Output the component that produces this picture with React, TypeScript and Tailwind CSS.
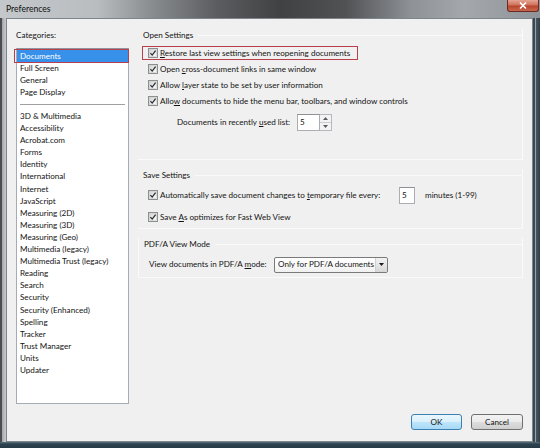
import React from "react";

const categoriesTop = ["Full Screen", "General", "Page Display"];
const categoriesBottom = [
  "3D & Multimedia",
  "Accessibility",
  "Acrobat.com",
  "Forms",
  "Identity",
  "International",
  "Internet",
  "JavaScript",
  "Measuring (2D)",
  "Measuring (3D)",
  "Measuring (Geo)",
  "Multimedia (legacy)",
  "Multimedia Trust (legacy)",
  "Reading",
  "Search",
  "Security",
  "Security (Enhanced)",
  "Spelling",
  "Tracker",
  "Trust Manager",
  "Units",
  "Updater",
];

function Check() {
  return (
    <svg width="10" height="10" viewBox="0 0 10 10" className="shrink-0">
      <defs>
        <linearGradient id="cbg" x1="0" y1="0" x2="1" y2="1">
          <stop offset="0" stopColor="#d4d4d4" />
          <stop offset="1" stopColor="#fbfbfb" />
        </linearGradient>
      </defs>
      <rect x="0.5" y="0.5" width="9" height="9" fill="#f6f6f6" stroke="#8e8f8f" />
      <rect x="1.5" y="1.5" width="7" height="7" fill="url(#cbg)" stroke="#c9c9c9" strokeWidth="0.6" />
      <path d="M2.4 5.1 L4.2 7.1 L7.6 2.6" fill="none" stroke="#2b3035" strokeWidth="1.3" />
    </svg>
  );
}

function U({ children }: { children: React.ReactNode }) {
  return <span className="underline underline-offset-[1px] decoration-[0.8px]">{children}</span>;
}

function Heading({ text }: { text: string }) {
  return (
    <div className="h-[12px] flex items-center pl-[5px]">
      <span className="whitespace-nowrap">{text}</span>
      <div className="flex-1 ml-[5px] h-px bg-[#fafafa]" />
    </div>
  );
}

function Field({ w, value }: { w: string; value: string }) {
  return (
    <div className={`${w} h-[17px] bg-white border border-[#abadb3] border-t-[#8e9094] flex items-center pl-[2px]`}>
      {value}
    </div>
  );
}

export default function App() {
  return (
    <div className="w-[540px] h-[448px] flex flex-col overflow-hidden bg-[#33434d] font-['Lato','Segoe_UI',sans-serif] text-[8.1px] leading-none text-[#141414]">
      {/* Title bar */}
      <div className="h-[18px] shrink-0 relative flex items-center bg-[linear-gradient(90deg,#c4c8cb_0%,#b9bdc0_18%,#8a8d90_28%,#5b5d60_40%,#404143_52%,#505254_64%,#8e9195_76%,#a4a8ac_86%,#8f949a_100%)]">
        <span className="pl-[6px] text-[8.6px] text-[#101010]">Preferences</span>
        <div className="absolute right-[1px] top-0 w-[32px] h-[12px] rounded-b-[3px] border border-[#6b2a22] border-t-0 bg-[linear-gradient(180deg,#e5a493_0%,#d0735c_45%,#b8452c_55%,#c9674e_100%)] flex items-center justify-center">
          <svg width="8" height="7" viewBox="0 0 8 7">
            <path d="M1 0.5 L7 6.5 M7 0.5 L1 6.5" stroke="#ffffff" strokeWidth="1.6" />
          </svg>
        </div>
      </div>

      <div className="flex-1 flex min-h-0">
        {/* left frame */}
        <div className="w-[6px] shrink-0 bg-[linear-gradient(90deg,#4b4d50_0px,#4b4d50_2px,#9da2a6_2px,#b8bcbf_4px,#c4c8cb_6px)]" />
        {/* content */}
        <div className="flex-1 bg-[#f0f0f0] border border-[#7d868d] flex flex-col">
          <div className="h-[386px] flex">
            {/* left column */}
            <div className="ml-[9px] w-[113px] flex flex-col pt-[10px]">
              <div className="h-[12px] flex items-center">
                <span>
                  Cate<U>g</U>ories:
                </span>
              </div>
              <div className="relative mt-[7px] h-[356px] bg-white border border-[#a5acb5] border-t-[#8e959e] pt-px">
                <div className="h-[12px] bg-[#3790ea] text-white flex items-center pl-[3px]">Documents</div>
                {categoriesTop.map((c) => (
                  <div key={c} className="h-[12px] flex items-center pl-[3px]">
                    {c}
                  </div>
                ))}
                <div className="h-[12px] flex items-center pl-[3px] pr-[3px]">
                  <div className="w-full h-px bg-[#a0a0a0]" />
                </div>
                {categoriesBottom.map((c) => (
                  <div key={c} className="h-[12.1px] flex items-center pl-[3px] whitespace-nowrap">
                    {c}
                  </div>
                ))}
                {/* red annotation */}
                <div className="absolute -left-[3px] -right-px top-0 h-[14px] border border-[#b8404c]" />
              </div>
            </div>

            {/* right column */}
            <div className="ml-[9px] w-[385px] flex flex-col pt-[10px]">
              {/* Open Settings */}
              <div className="border-r border-b border-[#fafafa] pb-[28px]">
                <Heading text="Open Settings" />
                <div className="mt-[4px] h-[16px] flex items-center pl-[4px]">
                  <div className="h-[14px] w-[216px] border border-[#b8404c] flex items-center pl-[5px] gap-[2px]">
                    <Check />
                    <span className="whitespace-nowrap">
                      <U>R</U>estore last view settings when reopening documents
                    </span>
                  </div>
                </div>
                <div className="h-[16px] flex items-center pl-[10px] gap-[2px]">
                  <Check />
                  <span className="whitespace-nowrap">
                    Open <U>c</U>ross-document links in same window
                  </span>
                </div>
                <div className="h-[16px] flex items-center pl-[10px] gap-[2px]">
                  <Check />
                  <span className="whitespace-nowrap">
                    Allow <U>l</U>ayer state to be set by user information
                  </span>
                </div>
                <div className="h-[16px] flex items-center pl-[10px] gap-[2px]">
                  <Check />
                  <span className="whitespace-nowrap">
                    Allo<U>w</U> documents to hide the menu bar, toolbars, and window controls
                  </span>
                </div>
                <div className="mt-[4px] h-[18px] flex items-center pl-[39px]">
                  <span className="w-[120px] whitespace-nowrap">
                    Documents in recently <U>u</U>sed list:
                  </span>
                  <Field w="w-[23px]" value="5" />
                  <div className="w-[12px] h-[17px] flex flex-col border border-[#b5b8bd] border-l-0 bg-[#f3f3f3]">
                    <div className="flex-1 flex items-center justify-center border-b border-[#c9cbce]">
                      <svg width="5" height="3" viewBox="0 0 5 3">
                        <path d="M0 3 L2.5 0 L5 3Z" fill="#5a5a5a" />
                      </svg>
                    </div>
                    <div className="flex-1 flex items-center justify-center">
                      <svg width="5" height="3" viewBox="0 0 5 3">
                        <path d="M0 0 L2.5 3 L5 0Z" fill="#5a5a5a" />
                      </svg>
                    </div>
                  </div>
                </div>
              </div>

              {/* Save Settings */}
              <div className="mt-[9px] border-r border-b border-[#fafafa] pb-[3px]">
                <Heading text="Save Settings" />
                <div className="mt-[5px] h-[18px] flex items-center pl-[10px] gap-[2px]">
                  <Check />
                  <span className="w-[237px] whitespace-nowrap">
                    Automatically save document changes to <U>t</U>emporary file every:
                  </span>
                  <Field w="w-[16px]" value="5" />
                  <span className="ml-[8px] whitespace-nowrap">minutes (1-99)</span>
                </div>
                <div className="mt-[5px] h-[16px] flex items-center pl-[10px] gap-[2px]">
                  <Check />
                  <span className="whitespace-nowrap">
                    Save <U>A</U>s optimizes for Fast Web View
                  </span>
                </div>
              </div>

              {/* PDF/A View Mode */}
              <div className="mt-[9px] border-r border-b border-l border-[#fafafa] pb-[4px]">
                <Heading text="PDF/A View Mode" />
                <div className="mt-[6px] h-[17px] flex items-center pl-[10px]">
                  <span className="w-[125px] whitespace-nowrap">
                    View documents in PDF/A <U>m</U>ode:
                  </span>
                  <div className="w-[114px] h-[16px] rounded-[2px] border border-[#7a7a7a] bg-[linear-gradient(180deg,#ffffff_0%,#fafafa_50%,#f0f0f0_100%)] flex items-center">
                    <span className="flex-1 pl-[3px] whitespace-nowrap">Only for PDF/A documents</span>
                    <div className="w-[12px] h-full flex items-center justify-center bg-[linear-gradient(180deg,#f2f2f2_0%,#e6e6e6_50%,#d6d6d6_100%)] border-l border-[#d0d0d0] rounded-r-[2px]">
                      <svg width="5" height="3" viewBox="0 0 5 3">
                        <path d="M0 0 L2.5 3 L5 0Z" fill="#1a1a1a" />
                      </svg>
                    </div>
                  </div>
                </div>
              </div>
            </div>
          </div>

          {/* buttons */}
          <div className="mt-[9px] flex justify-end gap-[9px] pr-[9px]">
            <div className="w-[51px] h-[16px] rounded-[3px] border border-[#3c7fb1] bg-[linear-gradient(180deg,#eaf6fd_0%,#d9f0fc_50%,#bee6fd_51%,#a7d9f5_100%)] flex items-center justify-center">
              OK
            </div>
            <div className="w-[52px] h-[16px] rounded-[3px] border border-[#707070] bg-[linear-gradient(180deg,#f2f2f2_0%,#ebebeb_50%,#dddddd_51%,#cfcfcf_100%)] flex items-center justify-center">
              Cancel
            </div>
          </div>
        </div>
        {/* right frame */}
        <div className="w-[7px] shrink-0 bg-[linear-gradient(90deg,#3b4852_0px,#3b4852_2px,#9aa3ab_2px,#9aa3ab_3px,#4a5862_3px,#2f3d46_7px)]" />
      </div>
      {/* bottom frame */}
      <div className="h-[6px] shrink-0 bg-[linear-gradient(180deg,#5d6f7a_0px,#2c4250_2px,#263a46_6px)]" />
    </div>
  );
}
